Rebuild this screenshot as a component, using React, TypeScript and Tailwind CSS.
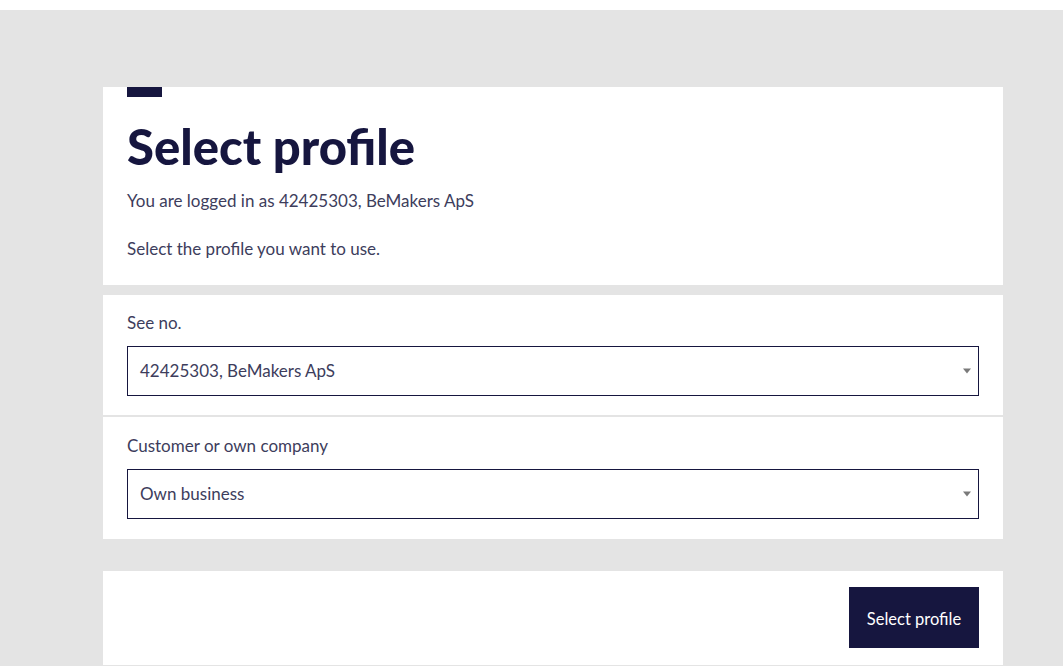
function Caret() {
  return (
    <svg width="8" height="6" viewBox="0 0 8 6" className="shrink-0">
      <path d="M0 0.5 H8 L4 5.5 Z" fill="#7a7a7a" />
    </svg>
  );
}

export default function App() {
  return (
    <div className="min-h-screen bg-white pt-[10px]" style={{ fontFamily: 'Lato, "Noto Sans", sans-serif' }}>
      <div className="min-h-[656px] bg-[#e4e4e4] pt-[77px] pb-[2px]">
        <div className="ml-[103px] w-[900px]">
          {/* Intro card */}
          <div className="bg-white px-6 pb-[24px]">
            <div className="h-[10px] w-[35px] bg-[#16163f]" />
            <h1 className="mt-[25px] text-[49px] font-black leading-[48px] text-[#16163f]">Select profile</h1>
            <p className="mt-[19px] text-[17px] leading-6 text-[#3d3d5c]">You are logged in as 42425303, BeMakers ApS</p>
            <p className="mt-[24px] text-[17px] leading-6 text-[#3d3d5c]">Select the profile you want to use.</p>
          </div>

          {/* Selects */}
          <div className="mt-[10px] flex flex-col gap-[2px] bg-[#e4e4e4]">
            <div className="bg-white px-6 pt-4 pb-[19px]">
              <label className="block text-[17px] leading-6 text-[#3d3d5c]">See no.</label>
              <div className="mt-[11px] flex h-[50px] items-center justify-between border border-[#16163f] pl-[12px] pr-[7px] text-[17px] text-[#3d3d5c]">
                <span>42425303, BeMakers ApS</span>
                <Caret />
              </div>
            </div>
            <div className="bg-white px-6 pt-[17px] pb-[20px]">
              <label className="block text-[17px] leading-6 text-[#3d3d5c]">Customer or own company</label>
              <div className="mt-[11px] flex h-[50px] items-center justify-between border border-[#16163f] pl-[12px] pr-[7px] text-[17px] text-[#3d3d5c]">
                <span>Own business</span>
                <Caret />
              </div>
            </div>
          </div>

          {/* Actions */}
          <div className="mt-[32px] flex justify-end bg-white px-6 pt-4 pb-[17px]">
            <button className="h-[61px] w-[130px] bg-[#16163f] pt-[3px] text-[16.5px] text-white">Select profile</button>
          </div>
        </div>
      </div>
    </div>
  );
}
